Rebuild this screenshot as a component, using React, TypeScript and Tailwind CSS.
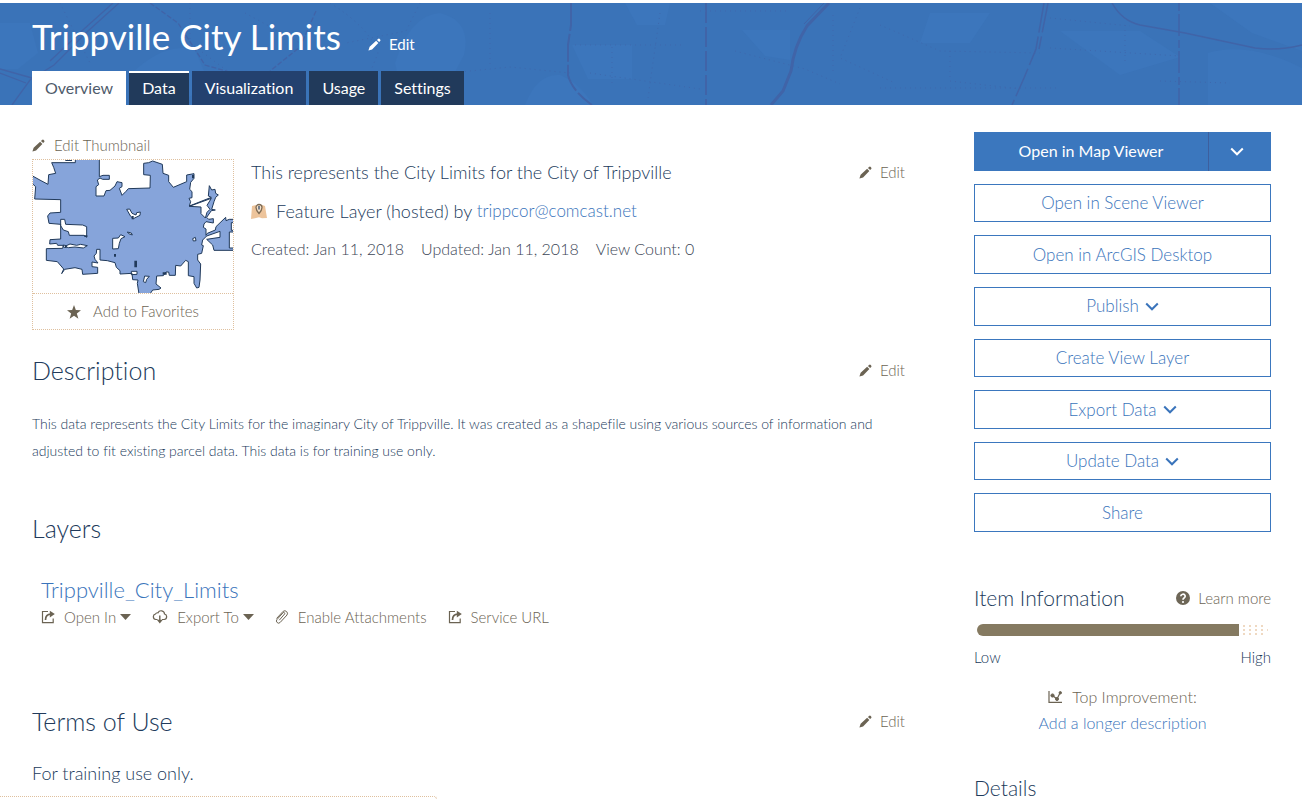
import type { ReactNode } from "react";

type IconProps = { className?: string };

function Pencil({ className = "" }: IconProps) {
  return (
    <svg viewBox="0 0 32 32" className={`h-[13px] w-[13px] shrink-0 fill-current ${className}`} aria-hidden="true">
      <path d="M1 31 4 21.500 20 6.500 25.500 12 10 28ZM22 4.800 24.700 2.300Q27 .500 29.500 2.800T30 7.200L27.300 10Z" />
    </svg>
  );
}

function Chevron({ className = "" }: IconProps) {
  return (
    <svg viewBox="0 0 14 9" className={`h-[9px] w-[14px] fill-none stroke-current ${className}`} aria-hidden="true">
      <path d="M1.200 1.500 7 7.300l5.800-5.800" strokeWidth="2" />
    </svg>
  );
}

function Star() {
  return (
    <svg viewBox="0 0 32 32" className="h-[14px] w-[14px] fill-current" aria-hidden="true">
      <path d="m16 0 4.200 11.600L32 12l-9.500 7.400L26 31.500l-10-7-10 7 3.500-12.100L0 12l11.800-.4Z" />
    </svg>
  );
}

function Launch() {
  return (
    <svg viewBox="0 0 14 14" className="h-[14px] w-[14px] fill-none stroke-current" aria-hidden="true">
      <path d="M7 1.500H1.500v11.200h10.700V8.500" strokeWidth="1.200" />
      <path d="M4.500 10C4.500 6.500 6.500 4.300 10 4.200" strokeWidth="1.700" />
      <path d="M8.800.800 13.800 4 8.800 7.500Z" fill="currentColor" stroke="none" />
    </svg>
  );
}

function CloudDown() {
  return (
    <svg viewBox="0 0 16 14" className="h-[14px] w-4 fill-none stroke-current" aria-hidden="true">
      <path
        d="M5.500 9.500H3.800A2.800 2.800 0 0 1 3.500 4 2.300 2.300 0 0 1 6 2.800 3.400 3.400 0 0 1 12.500 4a2.800 2.800 0 0 1-.3 5.500H10"
        strokeWidth="1.200"
      />
      <path d="M7.800 5.500V12" strokeWidth="1.400" />
      <path d="M4.800 9.800h6L7.800 13.500Z" fill="currentColor" stroke="none" />
    </svg>
  );
}

function Clip() {
  return (
    <svg viewBox="0 0 14 14" className="h-[14px] w-[14px] fill-none stroke-current" aria-hidden="true">
      <path
        d="M4.300 10.200 9.600 4a1 1 0 0 0-1.500-1.300L2 9.500a2.100 2.100 0 0 0 3.200 2.900L12 5a2.700 2.700 0 0 0-3.800-3.700L1.500 8.500"
        strokeWidth="1"
      />
    </svg>
  );
}

function Question() {
  return (
    <svg viewBox="0 0 14 14" className="h-[14px] w-[14px]" aria-hidden="true">
      <circle cx="7" cy="7" r="7" className="fill-[#6d6657]" />
      <path d="M4.800 5.300a2.200 2.100 0 1 1 3.300 1.800Q7 7.700 7 8.700" className="fill-none stroke-white" strokeWidth="1.700" />
      <circle cx="7" cy="11" r="1.100" className="fill-white" />
    </svg>
  );
}

function ChartIcon() {
  return (
    <svg viewBox="0 0 14 12" className="h-3 w-[14px] fill-current stroke-current" aria-hidden="true">
      <path d="M1 0v11.300h13" fill="none" strokeWidth="1.200" />
      <path d="m4.500 4.500 4.500 3.500L12 2" fill="none" strokeWidth="1.200" />
      <circle cx="4.500" cy="4.500" r="1.600" />
      <circle cx="9" cy="8" r="1.500" />
      <circle cx="12.300" cy="1.800" r="1.200" />
    </svg>
  );
}

function LayerIcon() {
  return (
    <svg viewBox="0 0 16 16" className="h-4 w-4" aria-hidden="true">
      <path d="m1 3 4-1 3 1 3-1 3 1 2 12-5 .3-3-1-4 1L0 16Z" className="fill-[#edc49b]" />
      <path
        d="M8 10.500C5.800 8 5 6.300 5 4.500a3 3 0 0 1 6 0c0 1.800-.8 3.500-3 6Z"
        className="fill-[#f6e3cc] stroke-[#7d6b55]"
        strokeWidth="1.300"
      />
      <path d="M8 3v3.500" className="stroke-[#56657a]" strokeWidth="1.600" />
    </svg>
  );
}

function HeaderMap() {
  return (
    <svg
      viewBox="0 0 1302 102"
      preserveAspectRatio="xMidYMid slice"
      className="absolute inset-0 h-full w-full fill-none"
      aria-hidden="true"
    >
      <g className="fill-[#3c76bc]">
        <path d="M395 60q15-48 45-50 32 8 24 42l-20 38-40 12Z" />
        <path d="M525 102q12-32 35-30 20 8 33 30Z" />
        <path d="M572 42h60v34h-44ZM625 0h45l-5 22h-28ZM742 27h48v30l-25-4Z" />
        <path d="M1210 0h92v48l-50-18ZM1208 50q40-12 94 15v37h-94Z" />
        <path d="M130 72q35-34 65-25l15 35-35 20ZM0 20h30l8 30-20 16H0Z" />
        <path d="M1060 28h80l40 26-60 18ZM930 10h60l-20 30h-50Z" />
      </g>
      <g className="stroke-[#4064a8]" strokeWidth="2">
        <path d="M119 0 88 28 54 62 30 77 12 102M113 0 84 26 50 58M0 66l32 9M0 70l26 10" strokeWidth="1.300" />
        <path d="M150 0 178 20 205 62 240 72M316 8l-16 36-30 24" strokeWidth="1.300" strokeDasharray="5 2" />
        <path d="M571 0v22l-3 20v30q4 16 24 30" strokeDasharray="28 3" />
        <path d="M706 0v102" strokeDasharray="20 4" />
        <path d="m829 0-22 23q-13 20-16 45l-8 20-12 14" strokeWidth="3" />
        <path d="m824 0-20 21" strokeWidth="1" />
        <path d="m1044 0-8 46-12 29-12 27M1048 0l-9 46" strokeWidth="1.500" strokeDasharray="30 4" />
        <path d="M1112 0q10 18 28 22l45 8 70 15q24 3 47-3" strokeWidth="1.500" />
        <path d="M1179 0v102" strokeWidth="1.500" strokeDasharray="8 3 22 4" />
      </g>
      <g className="stroke-[#3e68ad]" strokeWidth="1" strokeDasharray="1 4">
        <path d="M330 0q40 25 48 50l-20 50M420 0l-14 28-60 12M450 70l60-6 60 6M490 10v55M575 42h110M590 70l110 16M612 44v40" />
        <path d="M735 48l70 18 35 15M833 12v60M860 5l-20 50 55 25M880 22l60 26 100 2M950 48v30l70 8M1050 15l80 8M1125 22v38M880 85h180M1050 45l130 8M1160 78l70 2" />
        <path d="M190 0v40l40 30M60 0l30 60M245 10l55 30M700 8h90M660 10l-12 85" />
      </g>
    </svg>
  );
}

function CityMap() {
  return (
    <svg viewBox="39 90 600 399" className="block aspect-[200/133] w-full" role="img" aria-label="City limits map">
      <path
        className="fill-[#86a4da] stroke-[#213a5b]"
        strokeWidth="3"
        fillRule="evenodd"
        d="M36 137 63 152 84 163 86 134 107 130 101 112 95 98H166V87H238V140L249 136H268V148H248L240 144 232 150 236 164 228 170V198H252L258 182 270 181 285 168 291 155 306 158V170L298 175 306 196 318 184 325 176 390 174 391 136 371 134V100L386 98 398 93 427 103 429 130 446 136V155L460 172 500 155V135L522 131V145L512 157 509 178 516 185V203L507 205 512 215 508 228 574 202 565 198 568 167 575 180 585 178 587 190 595 195 587 202 582 215 575 238 586 240 574 242 560 262 566 268 580 266V279L558 275 552 282 550 292 558 297V316L562 310 586 300 588 290 617 262 618 272 628 268H642V278H634V301H642V306H628V354H642V361H582L578 345 560 328 600 322V304L560 318 548 330 545 345 550 347 545 370 533 373V390L542 402 540 450 537 472 530 474 522 460V440L505 437V395L497 391 482 408 467 406 466 436 448 436 446 426H438L430 437 410 438 408 462 423 474 417 478 398 480 390 492H357L352 460 354 450 338 449 336 430 300 432V422L289 412 285 398 262 392 240 390V358L230 358 229 370 222 378 225 388 234 399 216 396V410L233 412V430L188 433 186 418 165 413 134 418 125 431 131 417 112 395 79 391V356L128 355 130 346 113 346 110 340 89 342 90 329 122 327V283L87 280 83 258 90 249 122 247V209L44 207 47 170 36 160Z
        M122 268H134L137 283 188 285 200 290V322L192 316H148L145 305 130 300 122 287Z
        M135 349 150 342 170 346 182 343 202 347 190 354 165 351 145 353Z
        M278 325 295 324 302 314 315 320 303 326 298 340 295 356 278 357Z
        M320 238 329 237 336 250 348 255 350 248 361 246 360 256 340 266 332 259Z
        M322 306 334 309 337 315 326 311Z
        M518 326 526 322 528 332 520 333Z
        M508 229 543 231 543 251 556 264 561 247 570 238 561 226 574 205Z
        M334 424H351V433L334 434Z M370 455 374 438 388 439 380 448 377 458Z
        M130 345 139 347V353L130 351Z"
      />
      <path
        className="fill-[#213a5b]"
        d="M343 392h8v20h-8ZM282 372h6v8h-6ZM136 90h20v3h-20ZM193 316h9v5h-9ZM428 427h12v7h-12ZM335 258h6v10h-6ZM516 135h6v10h-6Z"
      />
    </svg>
  );
}

function EditButton() {
  return (
    <button type="button" className="flex items-center gap-2 text-[15px] leading-5 font-light text-[#6b6353]">
      <Pencil />
      Edit
    </button>
  );
}

function SectionHeading({ title, edit = false }: { title: string; edit?: boolean }) {
  return (
    <div className="flex h-8 items-center justify-between">
      <h2 className="text-[25px] leading-8 font-light text-[#213a5b]">{title}</h2>
      {edit && <EditButton />}
    </div>
  );
}

function LayerAction({ icon, label, menu = false }: { icon: ReactNode; label: string; menu?: boolean }) {
  return (
    <button type="button" className="flex items-center text-[#6b6353]">
      {icon}
      <span className="ml-[9px]">{label}</span>
      {menu && (
        <svg viewBox="0 0 11 6" className="ml-1 h-1.5 w-[11px] fill-current" aria-hidden="true">
          <path d="M0 0h11L5.500 6Z" />
        </svg>
      )}
    </button>
  );
}

const tabs = [
  { label: "Overview", look: "bg-white text-[#4f5b6b] border-white" },
  { label: "Data", look: "bg-[#213a5b] text-white border-white" },
  { label: "Visualization", look: "bg-[#23416f] text-white border-[#23416f]" },
  { label: "Usage", look: "bg-[#213a5b] text-white border-[#213a5b]" },
  { label: "Settings", look: "bg-[#213a5b] text-white border-[#213a5b]" },
];

const actions = [
  { label: "Open in Scene Viewer", menu: false },
  { label: "Open in ArcGIS Desktop", menu: false },
  { label: "Publish", menu: true },
  { label: "Create View Layer", menu: false },
  { label: "Export Data", menu: true },
  { label: "Update Data", menu: true },
  { label: "Share", menu: false },
];

export default function App() {
  return (
    <div className="min-h-screen bg-white pt-[3px] font-['Lato','Open_Sans',sans-serif] text-[#213a5b] [font-variant-ligatures:none]">
      <header className="relative bg-[#3a73b8]">
        <HeaderMap />
        <div className="relative flex flex-col pl-8">
          <div className="flex h-[68px] items-center gap-[27px] pb-0.5 text-white">
            <h1 className="text-[35px] leading-[66px]">Trippville City Limits</h1>
            <button type="button" className="mt-4 flex items-center gap-2 text-[15px] leading-5">
              <Pencil />
              Edit
            </button>
          </div>
          <nav className="flex gap-[3px]">
            {tabs.map((tab) => (
              <a
                key={tab.label}
                href="#"
                className={`flex h-[34px] items-center border-t-2 px-[13px] pb-0.5 text-base leading-6 ${tab.look}`}
              >
                {tab.label}
              </a>
            ))}
          </nav>
        </div>
      </header>

      <div className="flex gap-[69px] pr-[31px] pl-8">
        <main className="min-w-0 flex-1 pt-[30px]">
          <div className="flex gap-[17px]">
            <div className="w-[202px] shrink-0">
              <button
                type="button"
                className="flex h-6 items-start gap-[9px] text-[15px] leading-5 font-light text-[#6b6353]"
              >
                <Pencil className="mt-1" />
                Edit Thumbnail
              </button>
              <div className="border border-dotted border-[#dfc09e]">
                <CityMap />
                <button
                  type="button"
                  className="flex h-9 w-full items-center justify-center gap-3 border-t border-dotted border-[#dfc09e] text-[15px] font-light text-[#6b6353]"
                >
                  <Star />
                  Add to Favorites
                </button>
              </div>
            </div>
            <div className="min-w-0 flex-1 pt-[25px]">
              <div className="flex h-6 items-center justify-between">
                <p className="text-lg leading-6 font-light">This represents the City Limits for the City of Trippville</p>
                <EditButton />
              </div>
              <p className="mt-[15px] flex h-6 items-center text-lg leading-6 font-light">
                <LayerIcon />
                <span className="ml-[9px] whitespace-pre">Feature Layer (hosted) by </span>
                <a href="#" className="text-[17px] text-[#3a74bb]">
                  trippcor@comcast.net
                </a>
              </p>
              <p className="mt-[14px] flex h-6 items-center gap-[17px] text-base leading-6 font-light text-[#3c4656]">
                <span>Created: Jan 11, 2018</span>
                <span>Updated: Jan 11, 2018</span>
                <span>View Count: 0</span>
              </p>
            </div>
          </div>

          <section className="mt-6">
            <SectionHeading title="Description" edit />
            <p className="mt-6 text-sm leading-[27px] font-light">
              This data represents the City Limits for the imaginary City of Trippville. It was created as a shapefile
              using various sources of information and adjusted to fit existing parcel data. This data is for training
              use only.
            </p>
          </section>

          <section className="mt-12">
            <SectionHeading title="Layers" />
            <div className="mt-8 pl-[9px]">
              <a href="#" className="block text-[22px] leading-7 font-light text-[#3a74bb]">
                Trippville_City_Limits
              </a>
              <div className="mt-[3px] flex h-5 items-center gap-[21px] text-[15px] leading-5 font-light">
                <LayerAction icon={<Launch />} label="Open In" menu />
                <LayerAction icon={<CloudDown />} label="Export To" menu />
                <LayerAction icon={<Clip />} label="Enable Attachments" />
                <LayerAction icon={<Launch />} label="Service URL" />
              </div>
            </div>
          </section>

          <section className="mt-[78px]">
            <SectionHeading title="Terms of Use" edit />
            <p className="mt-6 text-lg leading-6 font-light">For training use only.</p>
          </section>
        </main>

        <aside className="w-[297px] shrink-0 pt-[27px]">
          <div className="grid h-[400px] grid-rows-8 gap-[13px] text-[17px] font-light">
            <div className="flex bg-[#3b77be] text-base font-normal text-white">
              <button type="button" className="flex-1">
                Open in Map Viewer
              </button>
              <button
                type="button"
                aria-label="More viewers"
                className="flex w-[63px] items-center justify-center border-l border-[#3d5f9e] pr-1.5"
              >
                <Chevron />
              </button>
            </div>
            {actions.map((action) => (
              <button
                key={action.label}
                type="button"
                className="flex items-center justify-center gap-1.5 border border-[#3b77be] text-[#3a74bb]"
              >
                {action.label}
                {action.menu && <Chevron />}
              </button>
            ))}
          </div>

          <section className="mt-[52px]">
            <div className="flex h-7 items-center justify-between">
              <h2 className="text-[21px] leading-7 font-light">Item Information</h2>
              <a href="#" className="flex items-center gap-2 text-[15px] font-light text-[#6b6353]">
                <Question />
                Learn more
              </a>
            </div>
            <div
              role="meter"
              aria-label="Item information"
              aria-valuenow={91}
              aria-valuemin={0}
              aria-valuemax={100}
              className="mx-[3px] mt-3 h-3 overflow-hidden rounded-full bg-[radial-gradient(#efd9c2_1px,transparent_1px)] bg-[length:6px_4px]"
            >
              <div className="h-full w-[90%] bg-[#857a61]" />
            </div>
            <div className="mt-[11px] flex justify-between text-[15px] leading-5 font-light">
              <span>Low</span>
              <span>High</span>
            </div>
            <div className="mt-[17px] flex flex-col items-center text-base leading-[26px] font-light">
              <p className="flex items-center gap-2.5 text-[#6b6353]">
                <ChartIcon />
                Top Improvement:
              </p>
              <a href="#" className="text-[#3a74bb]">
                Add a longer description
              </a>
            </div>
          </section>
          <h2 className="mt-[38px] text-[21px] leading-[28px] font-light">Details</h2>
        </aside>
      </div>
      <div className="fixed bottom-0 left-0 h-[3px] w-[437px] rounded-tr-sm border-t border-r border-dotted border-[#dfc09e] bg-white" />
    </div>
  );
}
